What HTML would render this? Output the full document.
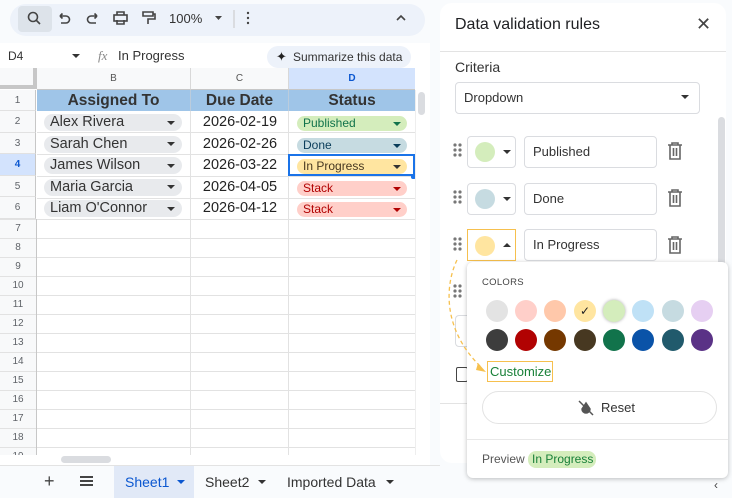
<!DOCTYPE html>
<html><head><meta charset="utf-8"><style>
*{box-sizing:border-box;margin:0;padding:0}
body{width:732px;height:498px;overflow:hidden;background:#f9fbfd;font-family:"Liberation Sans",Arial,sans-serif;position:relative;color:#202124}
.a{position:absolute}
.rh{position:absolute;left:0;width:36px;font-size:10px;color:#5f6368;text-align:center;border-bottom:1px solid #e1e1e1;background:#f8f9fa;border-right:1px solid #c7c7c7}
.chip{position:absolute;height:17px;border-radius:9px;font-size:12px;line-height:17px;padding-left:6px}
.tri{position:absolute;width:0;height:0;border-left:4px solid transparent;border-right:4px solid transparent;border-top:4px solid #333}
.sw{position:absolute;width:22px;height:22px;border-radius:50%}
.box{position:absolute;border:1px solid #dadce0;border-radius:4px;background:#fff}
</style></head><body>
<div class="a" style="left:10px;top:4px;width:415px;height:32px;background:#edf2fa;border-radius:16px"></div>
<div class="a" style="left:18px;top:6px;width:34px;height:26px;background:#dde3ea;border-radius:4px"></div>
<svg class="a" style="left:0;top:0" width="430" height="40">
<g fill="none" stroke="#444" stroke-width="1.6">
<circle cx="33" cy="17" r="4.5"/><path d="M36 20l4 4"/>
<path d="M60 16h6a3.5 3.5 0 010 7h-5M60 16l2.5-2.5M60 16l2.5 2.5"/>
<path d="M97 16h-6a3.5 3.5 0 000 7h5M97 16l-2.5-2.5M97 16l-2.5 2.5"/>
<rect x="114" y="15" width="13" height="6"/><path d="M117 15v-3h7v3M117 20v4h7v-4"/>
<path d="M143 12h10v4h-10zM153 14h2v5h-7v5"/>
<path d="M248 13v0M248 18v0M248 23v0" stroke-linecap="round" stroke-width="2.4"/>
<path d="M397 20l4-4 4 4"/>
</g>
<path d="M215 16h7l-3.5 4z" fill="#444"/>
<line x1="234" y1="10" x2="234" y2="28" stroke="#c7c7c7"/>
</svg>
<div class="a" style="left:169px;top:11px;font-size:13px;color:#333">100%</div>
<div class="a" style="left:0;top:43px;width:430px;height:25px;background:#fff"></div>
<div class="a" style="left:8px;top:49px;font-size:12px;color:#333">D4</div>
<div class="tri" style="left:72px;top:54px"></div>
<div class="a" style="left:98px;top:48px;font-size:13px;color:#888;font-style:italic;font-family:'Liberation Serif',serif">fx</div>
<div class="a" style="left:118px;top:48px;font-size:13px;color:#333">In Progress</div>
<div class="a" style="left:267px;top:46px;width:144px;height:22px;background:#edf2fa;border-radius:11px;font-size:12px;line-height:22px;padding-left:26px;color:#333">Summarize this data</div>
<div class="a" style="left:276px;top:49px;font-size:13px;color:#222">✦</div>
<div class="a" style="left:0;top:68px;width:430px;height:395px;background:#fff"></div>
<div class="a" style="left:0;top:68px;width:37px;height:21px;background:#f8f9fa;border-right:4px solid #c7c7c7;border-bottom:4px solid #c7c7c7"></div>
<div class="a" style="left:37px;top:68px;width:154px;height:22px;background:#f8f9fa;border-right:1px solid #d8d8d8;border-bottom:1px solid #c7c7c7;font-size:10px;text-align:center;line-height:22px;color:#555">B</div>
<div class="a" style="left:191px;top:68px;width:98px;height:22px;background:#f8f9fa;border-right:1px solid #d8d8d8;border-bottom:1px solid #c7c7c7;font-size:10px;text-align:center;line-height:22px;color:#555">C</div>
<div class="a" style="left:289px;top:68px;width:126px;height:22px;background:#d3e3fd;border-bottom:1px solid #c7c7c7;font-size:10px;text-align:center;line-height:22px;color:#0b57d0;font-weight:bold">D</div>
<div class="rh" style="top:90px;height:21px;line-height:21px">1</div>
<div class="rh" style="top:111px;height:22px;line-height:22px">2</div>
<div class="rh" style="top:133px;height:21px;line-height:21px">3</div>
<div class="rh" style="top:154px;height:22px;line-height:22px;background:#d3e3fd;color:#0b57d0;font-weight:bold">4</div>
<div class="rh" style="top:176px;height:21px;line-height:21px">5</div>
<div class="rh" style="top:197px;height:22px;line-height:22px">6</div>
<div class="a" style="left:37px;top:90px;width:378px;height:21px;background:#9fc5e8"></div>
<div class="a" style="left:37px;top:90px;width:154px;height:21px;font-size:15.5px;font-weight:bold;text-align:center;line-height:21px;color:#333;border-right:1px solid #bcd">Assigned To</div>
<div class="a" style="left:191px;top:90px;width:98px;height:21px;font-size:15.5px;font-weight:bold;text-align:center;line-height:21px;color:#333;border-right:1px solid #bcd">Due Date</div>
<div class="a" style="left:289px;top:90px;width:126px;height:21px;font-size:15.5px;font-weight:bold;text-align:center;line-height:21px;color:#333">Status</div>
<div class="a" style="left:37px;top:111px;width:378px;height:352px;background:repeating-linear-gradient(to bottom,transparent 0,transparent 21px,#e2e2e2 21px,#e2e2e2 22px) 0 0/100% 108px no-repeat"></div>
<div class="a" style="left:0;top:219px;width:415px;height:236px;background:repeating-linear-gradient(to bottom,#e2e2e2 0,#e2e2e2 1px,transparent 1px,transparent 19px)"></div>
<div class="a" style="left:190px;top:111px;width:1px;height:344px;background:#e2e2e2"></div>
<div class="a" style="left:288px;top:111px;width:1px;height:344px;background:#e2e2e2"></div>
<div class="a" style="left:36px;top:219px;width:1px;height:236px;background:#c7c7c7"></div>
<div class="a" style="left:0;top:219px;width:36px;height:236px;background:#f8f9fa"></div>
<div class="a" style="left:0;top:219px;width:36px;height:236px;background:repeating-linear-gradient(to bottom,#e2e2e2 0,#e2e2e2 1px,transparent 1px,transparent 19px);font-size:10px;color:#5f6368;text-align:center;line-height:19px">
<div>7</div><div>8</div><div>9</div><div>10</div><div>11</div><div>12</div><div>13</div><div>14</div><div>15</div><div>16</div><div>17</div><div>18</div><div>19</div></div>
<div class="a" style="left:0;top:455px;width:430px;height:10px;background:#fff"></div>
<div class="chip" style="left:44px;top:114px;width:138px;background:#e8eaed;font-size:14.5px;color:#333">Alex Rivera</div>
<div class="chip" style="left:44px;top:136px;width:138px;background:#e8eaed;font-size:14.5px;color:#333">Sarah Chen</div>
<div class="chip" style="left:44px;top:157px;width:138px;background:#e8eaed;font-size:14.5px;color:#333">James Wilson</div>
<div class="chip" style="left:44px;top:179px;width:138px;background:#e8eaed;font-size:14.5px;color:#333">Maria Garcia</div>
<div class="chip" style="left:44px;top:200px;width:138px;background:#e8eaed;font-size:14.5px;color:#333">Liam O'Connor</div>
<div class="tri" style="left:167px;top:121px"></div><div class="tri" style="left:167px;top:142px"></div><div class="tri" style="left:167px;top:164px"></div><div class="tri" style="left:167px;top:185px"></div><div class="tri" style="left:167px;top:207px"></div>
<div class="a" style="left:191px;top:114px;width:98px;font-size:14.5px;text-align:center;color:#222;line-height:17px">2026-02-19</div>
<div class="a" style="left:191px;top:136px;width:98px;font-size:14.5px;text-align:center;color:#222;line-height:17px">2026-02-26</div>
<div class="a" style="left:191px;top:157px;width:98px;font-size:14.5px;text-align:center;color:#222;line-height:17px">2026-03-22</div>
<div class="a" style="left:191px;top:179px;width:98px;font-size:14.5px;text-align:center;color:#222;line-height:17px">2026-04-05</div>
<div class="a" style="left:191px;top:200px;width:98px;font-size:14.5px;text-align:center;color:#222;line-height:17px">2026-04-12</div>
<div class="chip" style="left:297px;top:116px;width:110px;height:15px;line-height:15px;background:#d4edbc;color:#11734b">Published</div>
<div class="chip" style="left:297px;top:138px;width:110px;height:15px;line-height:15px;background:#c6dbe1;color:#0a3d5a">Done</div>
<div class="a" style="left:288px;top:154px;width:127px;height:22px;border:2px solid #1a73e8"></div>
<div class="chip" style="left:297px;top:159px;width:110px;height:15px;line-height:15px;background:#ffe5a0;color:#473821">In Progress</div>
<div class="chip" style="left:297px;top:181px;width:110px;height:15px;line-height:15px;background:#ffcfc9;color:#b10202">Stack</div>
<div class="chip" style="left:297px;top:202px;width:110px;height:15px;line-height:15px;background:#ffcfc9;color:#b10202">Stack</div>
<div class="a" style="left:411px;top:174px;width:5px;height:5px;background:#1a73e8;border-radius:2px"></div>
<div class="tri" style="left:393px;top:122px;border-top-color:#11734b"></div>
<div class="tri" style="left:393px;top:144px;border-top-color:#0a3d5a"></div>
<div class="tri" style="left:393px;top:165px"></div>
<div class="tri" style="left:393px;top:187px;border-top-color:#b10202"></div>
<div class="tri" style="left:393px;top:208px;border-top-color:#b10202"></div>
<div class="a" style="left:415px;top:90px;width:13px;height:365px;background:#fff;border-left:1px solid #eee"></div>
<div class="a" style="left:418px;top:92px;width:7px;height:23px;background:#dadce0;border-radius:4px"></div>
<div class="a" style="left:61px;top:456px;width:50px;height:7px;background:#dadce0;border-radius:4px"></div>
<div class="a" style="left:0;top:465px;width:440px;height:33px;background:#f9fbfd;border-top:1px solid #e3e3e3"></div>
<div class="a" style="left:44px;top:471px;font-size:18px;color:#444">+</div>
<div class="a" style="left:80px;top:476px;width:13px;height:2px;background:#444;box-shadow:0 4px 0 #444,0 8px 0 #444"></div>
<div class="a" style="left:114px;top:466px;width:80px;height:32px;background:#e1e9f7"></div>
<div class="a" style="left:125px;top:474px;font-size:14px;color:#0b57d0">Sheet1</div>
<div class="tri" style="left:177px;top:480px;border-top-color:#0b57d0"></div>
<div class="a" style="left:205px;top:474px;font-size:14px;color:#333">Sheet2</div>
<div class="tri" style="left:258px;top:480px"></div>
<div class="a" style="left:287px;top:474px;font-size:14px;color:#333">Imported Data</div>
<div class="tri" style="left:386px;top:480px"></div>
<div class="a" style="left:440px;top:3px;width:286px;height:460px;background:#fff;border-radius:12px"></div>
<div class="a" style="left:455px;top:16px;font-size:16px;color:#202124">Data validation rules</div>
<div class="a" style="left:696px;top:14px;font-size:18px;color:#444">✕</div>
<div class="a" style="left:440px;top:51px;width:286px;height:1px;background:#e3e3e3"></div>
<div class="a" style="left:455px;top:59px;font-size:14px;color:#333">Criteria</div>
<div class="box" style="left:455px;top:82px;width:245px;height:32px;font-size:13px;line-height:30px;padding-left:8px;color:#333">Dropdown</div>
<div class="tri" style="left:681px;top:95px"></div>
<div class="a" style="left:718px;top:117px;width:7px;height:345px;background:#dadce0;border-radius:4px"></div>
<svg class="a" style="left:450px;top:140px" width="20" height="170" fill="#777">
<g><circle cx="5" cy="5" r="1.6"/><circle cx="10" cy="5" r="1.6"/><circle cx="5" cy="10" r="1.6"/><circle cx="10" cy="10" r="1.6"/><circle cx="5" cy="15" r="1.6"/><circle cx="10" cy="15" r="1.6"/></g>
<g transform="translate(0,47)"><circle cx="5" cy="5" r="1.6"/><circle cx="10" cy="5" r="1.6"/><circle cx="5" cy="10" r="1.6"/><circle cx="10" cy="10" r="1.6"/><circle cx="5" cy="15" r="1.6"/><circle cx="10" cy="15" r="1.6"/></g>
<g transform="translate(0,94)"><circle cx="5" cy="5" r="1.6"/><circle cx="10" cy="5" r="1.6"/><circle cx="5" cy="10" r="1.6"/><circle cx="10" cy="10" r="1.6"/><circle cx="5" cy="15" r="1.6"/><circle cx="10" cy="15" r="1.6"/></g>
<g transform="translate(0,141)"><circle cx="5" cy="5" r="1.6"/><circle cx="10" cy="5" r="1.6"/><circle cx="5" cy="10" r="1.6"/><circle cx="10" cy="10" r="1.6"/><circle cx="5" cy="15" r="1.6"/><circle cx="10" cy="15" r="1.6"/></g>
</svg>
<div class="box" style="left:467px;top:136px;width:49px;height:32px"></div>
<div class="sw" style="left:475px;top:142px;width:20px;height:20px;background:#d4edbc"></div>
<div class="tri" style="left:503px;top:150px"></div>
<div class="box" style="left:524px;top:136px;width:133px;height:32px;font-size:13px;line-height:30px;padding-left:8px;color:#333">Published</div>
<div class="box" style="left:467px;top:183px;width:49px;height:32px"></div>
<div class="sw" style="left:475px;top:189px;width:20px;height:20px;background:#c6dbe1"></div>
<div class="tri" style="left:503px;top:197px"></div>
<div class="box" style="left:524px;top:183px;width:133px;height:32px;font-size:13px;line-height:30px;padding-left:8px;color:#333">Done</div>
<div class="box" style="left:467px;top:229px;width:49px;height:32px;border-color:#f6c04e;border-radius:0"></div>
<div class="sw" style="left:475px;top:236px;width:20px;height:20px;background:#ffe5a0"></div>
<div class="tri" style="left:503px;top:243px;border-top:none;border-bottom:4px solid #333"></div>
<div class="box" style="left:524px;top:229px;width:133px;height:32px;font-size:13px;line-height:30px;padding-left:8px;color:#333">In Progress</div>
<svg class="a" style="left:664px;top:140px" width="24" height="120" fill="none" stroke="#666" stroke-width="1.6">
<g><path d="M4 5h14M8 5v-2h6v2M6 5v14h10v-14M9.5 8v8M12.5 8v8"/></g>
<g transform="translate(0,47)"><path d="M4 5h14M8 5v-2h6v2M6 5v14h10v-14M9.5 8v8M12.5 8v8"/></g>
<g transform="translate(0,94)"><path d="M4 5h14M8 5v-2h6v2M6 5v14h10v-14M9.5 8v8M12.5 8v8"/></g>
</svg>
<div class="box" style="left:455px;top:315px;width:20px;height:32px;border-right:none"></div>
<div class="a" style="left:456px;top:367px;width:12px;height:15px;border:1.5px solid #444;border-radius:2px"></div>
<div class="a" style="left:440px;top:403px;width:30px;height:1px;background:#e3e3e3"></div>
<div class="a" style="left:467px;top:262px;width:261px;height:216px;background:#fff;border-radius:6px;box-shadow:0 1px 5px rgba(0,0,0,.25)"></div>
<div class="a" style="left:482px;top:277px;font-size:9.5px;color:#444;letter-spacing:.3px">COLORS</div>
<div class="sw" style="left:486px;top:300px;background:#e3e3e3"></div>
<div class="sw" style="left:515px;top:300px;background:#ffcfc9"></div>
<div class="sw" style="left:544px;top:300px;background:#ffc8aa"></div>
<div class="sw" style="left:574px;top:300px;background:#ffe5a0;text-align:center;font-size:12px;line-height:22px">✓</div>
<div class="sw" style="left:603px;top:300px;background:#d4edbc;box-shadow:0 0 3px rgba(0,0,0,.35)"></div>
<div class="sw" style="left:632px;top:300px;background:#bfe1f6"></div>
<div class="sw" style="left:662px;top:300px;background:#c6dbe1"></div>
<div class="sw" style="left:691px;top:300px;background:#e6cff2"></div>
<div class="sw" style="left:486px;top:329px;background:#3d3d3d"></div>
<div class="sw" style="left:515px;top:329px;background:#b10202"></div>
<div class="sw" style="left:544px;top:329px;background:#753800"></div>
<div class="sw" style="left:574px;top:329px;background:#473821"></div>
<div class="sw" style="left:603px;top:329px;background:#11734b"></div>
<div class="sw" style="left:632px;top:329px;background:#0a53a8"></div>
<div class="sw" style="left:662px;top:329px;background:#215a6c"></div>
<div class="sw" style="left:691px;top:329px;background:#5a3286"></div>
<div class="a" style="left:487px;top:361px;width:66px;height:21px;border:1px solid #f6c04e;font-size:13px;color:#188038;line-height:19px;padding-left:2px">Customize</div>
<svg class="a" style="left:440px;top:255px" width="50" height="130"><path d="M17 5C5 30 2 75 42 113" fill="none" stroke="#f6c04e" stroke-width="1.3" stroke-dasharray="4 3"/><path d="M38 108l8 9-10-2z" fill="#f6c04e"/></svg>
<div class="a" style="left:482px;top:391px;width:235px;height:33px;border:1px solid #e3e3e3;border-radius:17px;font-size:13px;color:#333;line-height:31px;padding-left:118px">Reset</div>
<svg class="a" style="left:577px;top:399px" width="18" height="18" fill="none" stroke="#555" stroke-width="1.5"><path d="M5 10l4-6 4 6a4 4 0 01-8 0z" fill="#555"/><path d="M2 2l14 14"/></svg>
<div class="a" style="left:467px;top:439px;width:261px;height:1px;background:#e8e8e8"></div>
<div class="a" style="left:482px;top:452px;font-size:12px;color:#555">Preview</div>
<div class="a" style="left:528px;top:451px;width:68px;height:17px;background:#d4edbc;border-radius:8px;font-size:12px;color:#188038;line-height:17px;padding-left:4px">In Progress</div>
<div class="a" style="left:714px;top:478px;font-size:12px;color:#444">‹</div>
</body></html>
